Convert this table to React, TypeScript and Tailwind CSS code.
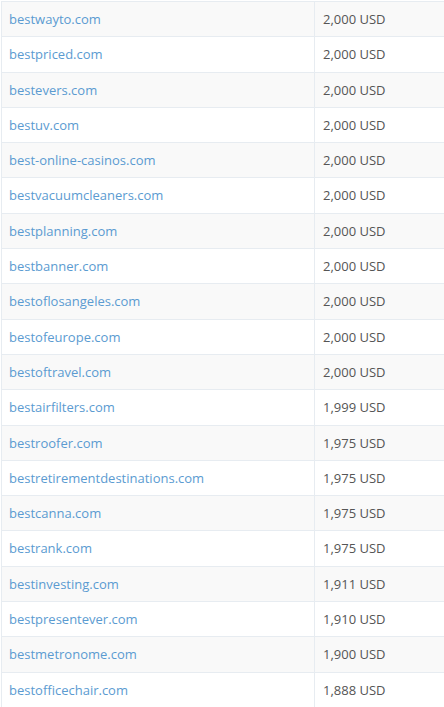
const rows: [string, string][] = [
  ["bestwayto.com", "2,000 USD"],
  ["bestpriced.com", "2,000 USD"],
  ["bestevers.com", "2,000 USD"],
  ["bestuv.com", "2,000 USD"],
  ["best-online-casinos.com", "2,000 USD"],
  ["bestvacuumcleaners.com", "2,000 USD"],
  ["bestplanning.com", "2,000 USD"],
  ["bestbanner.com", "2,000 USD"],
  ["bestoflosangeles.com", "2,000 USD"],
  ["bestofeurope.com", "2,000 USD"],
  ["bestoftravel.com", "2,000 USD"],
  ["bestairfilters.com", "1,999 USD"],
  ["bestroofer.com", "1,975 USD"],
  ["bestretirementdestinations.com", "1,975 USD"],
  ["bestcanna.com", "1,975 USD"],
  ["bestrank.com", "1,975 USD"],
  ["bestinvesting.com", "1,911 USD"],
  ["bestpresentever.com", "1,910 USD"],
  ["bestmetronome.com", "1,900 USD"],
  ["bestofficechair.com", "1,888 USD"],
];

export default function App() {
  return (
    <div className="h-[707px] w-[444px] overflow-hidden bg-white pl-px pt-px font-['Open_Sans',sans-serif] text-[13px] leading-[18.3px]">
      <table className="w-[460px] table-fixed border-collapse">
        <tbody>
          {rows.map(([domain, price], i) => (
            <tr key={domain} className={i % 2 === 0 ? "bg-[#f9f9f9]" : "bg-white"}>
              <td className="w-[313px] border border-[#e7ecf1] py-2 pl-[7px] pr-2">
                <a href="#" className="text-[#5b9bd1]">{domain}</a>
              </td>
              <td className="border border-[#e7ecf1] px-2 py-2 text-[#555]">{price}</td>
            </tr>
          ))}
        </tbody>
      </table>
    </div>
  );
}
